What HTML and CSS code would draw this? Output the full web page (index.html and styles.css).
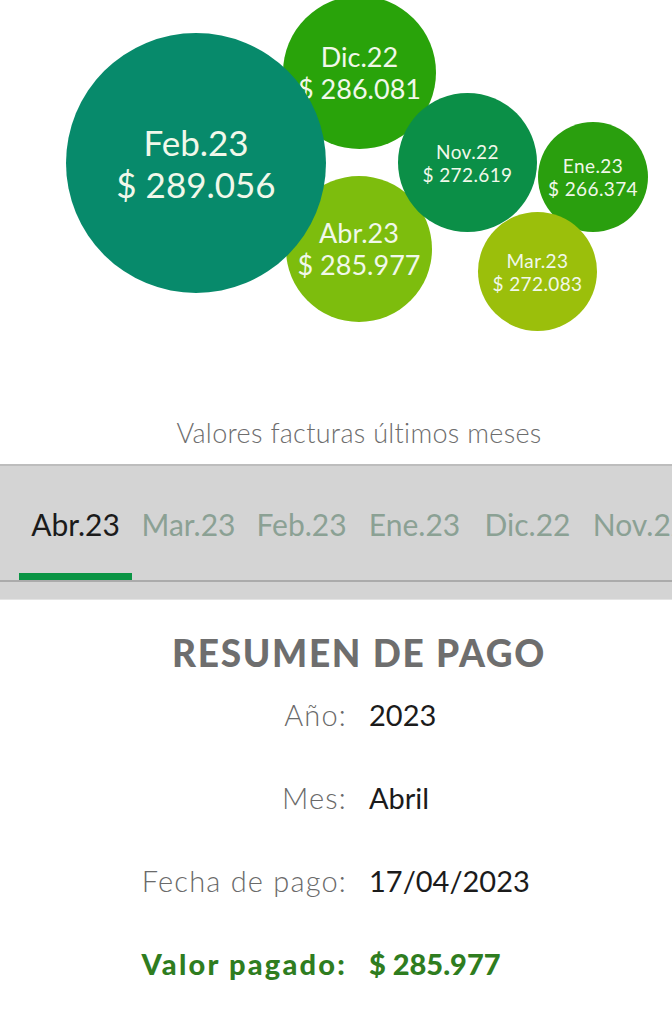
FILE: index.html
```html
<!DOCTYPE html>
<html lang="es">
<head>
<meta charset="utf-8">
<title>Valores facturas</title>
<link rel="stylesheet" href="styles.css">
</head>
<body>
<div class="chart">
  <div class="bubble b-feb" style="left:66px;top:33px;width:260px;height:260px;"><span>Feb.23</span><span>$ 289.056</span></div>
  <div class="bubble b-dic" style="left:283px;top:-4px;width:153px;height:153px;"><span>Dic.22</span><span>$ 286.081</span></div>
  <div class="bubble b-abr" style="left:286px;top:176px;width:146px;height:146px;"><span>Abr.23</span><span>$ 285.977</span></div>
  <div class="bubble b-nov" style="left:398px;top:93px;width:139px;height:139px;"><span>Nov.22</span><span>$ 272.619</span></div>
  <div class="bubble b-ene" style="left:538px;top:122px;width:110px;height:110px;"><span>Ene.23</span><span>$ 266.374</span></div>
  <div class="bubble b-mar" style="left:478px;top:212px;width:119px;height:119px;"><span>Mar.23</span><span>$ 272.083</span></div>
</div>
<p class="caption">Valores facturas últimos meses</p>
<div class="tabbar">
  <div class="tabs">
    <div class="tab active">Abr.23</div>
    <div class="tab">Mar.23</div>
    <div class="tab">Feb.23</div>
    <div class="tab">Ene.23</div>
    <div class="tab">Dic.22</div>
    <div class="tab">Nov.22</div>
  </div>
</div>
<section class="summary">
  <h2 class="summary-title">RESUMEN DE PAGO</h2>
  <dl class="rows">
    <dt>Año:</dt><dd>2023</dd>
    <dt>Mes:</dt><dd>Abril</dd>
    <dt>Fecha de pago:</dt><dd>17/04/2023</dd>
    <dt class="total">Valor pagado:</dt><dd class="total">$ 285.977</dd>
  </dl>
</section>
</body>
</html>
```

FILE: styles.css
```css
html, body {
  margin: 0;
  padding: 0;
  background: #ffffff;
}
body {
  width: 672px;
  height: 1010px;
  overflow: hidden;
  font-family: Lato, "Liberation Sans", sans-serif;
}
.chart {
  position: relative;
  height: 417px;
}
.bubble {
  position: absolute;
  border-radius: 50%;
  display: flex;
  flex-direction: column;
  align-items: center;
  justify-content: center;
  color: #f1f8ea;
  white-space: nowrap;
}
.b-feb { background: #078a6b; font-size: 35px; line-height: 42px; z-index: 1; }
.b-dic { background: #29a30a; font-size: 27px; line-height: 32px; }
.b-abr { background: #7dbd0d; font-size: 27px; line-height: 32px; }
.b-nov, .b-ene, .b-mar { font-size: 19px; line-height: 23px; letter-spacing: 0.4px; }
.b-nov { background: #0b8f47; }
.b-ene { background: #2a9f0e; }
.b-mar { background: #9bbf0b; }
.caption {
  margin: 0;
  font-size: 27px;
  line-height: 32px;
  letter-spacing: 0.3px;
  color: #6d6d6d;
  text-align: center;
  padding-left: 46px;
  font-weight: 300;
}
.tabbar {
  margin-top: 15px;
  border-top: 2px solid #bdbdbd;
  background: #d4d4d4;
  padding-bottom: 17px;
  border-bottom: 1px solid #e4e4e4;
}
.tabs {
  display: flex;
  padding-left: 19px;
  border-bottom: 2px solid #ababab;
  overflow: hidden;
  height: 114px;
}
.tab {
  flex: 0 0 113px;
  text-align: center;
  font-size: 30px;
  line-height: 36px;
  padding: 40px 0 33px;
  border-bottom: 7px solid transparent;
  color: #8ba194;
  white-space: nowrap;
}
.tab.active {
  color: #1b1b1b;
  border-bottom-color: #0a9444;
}
.summary {
  padding-top: 31px;
}
.summary-title {
  margin: 0;
  text-align: center;
  font-size: 37px;
  line-height: 44px;
  font-weight: 900;
  color: #6e6e6e;
  letter-spacing: 1.7px;
  padding-left: 46px;
}
.rows {
  margin: 22px 0 0;
  display: grid;
  grid-template-columns: 347px auto;
  column-gap: 22px;
  row-gap: 48px;
  font-size: 29px;
  line-height: 35px;
}
.rows dt {
  text-align: right;
  color: #6a6a6a;
  font-weight: 300;
  letter-spacing: 1.2px;
}
.rows dd {
  margin: 0;
  color: #1b1b1b;
}
.rows dt.total {
  letter-spacing: 2.2px;
}
.rows .total {
  color: #2f7d1f;
  font-weight: 900;
}
```
